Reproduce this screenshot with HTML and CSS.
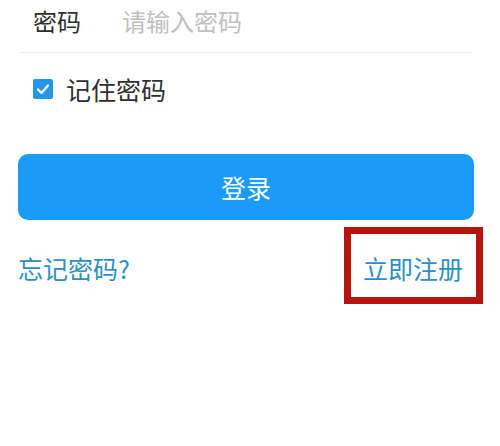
FILE: index.html
```html
<!DOCTYPE html>
<html lang="zh-CN">
<head>
<meta charset="utf-8">
<title>登录</title>
<link rel="stylesheet" href="styles.css">
</head>
<body>
<div class="page">
  <div class="pwd-row">
    <span class="pwd-label">密码</span>
    <span class="pwd-input">请输入密码</span>
  </div>
  <div class="remember">
    <span class="check">
      <svg viewBox="0 0 20 20" width="20" height="20"><path d="M5 10.5 L8.5 14 L15 6.5" fill="none" stroke="#fff" stroke-width="2.2" stroke-linecap="round" stroke-linejoin="round"/></svg>
    </span>
    <span class="remember-text">记住密码</span>
  </div>
  <div class="login-btn">登录</div>
  <div class="links">
    <span class="link">忘记密码?</span>
    <span class="link register">立即注册<span class="mark"></span></span>
  </div>
</div>
</body>
</html>
```
FILE: styles.css
```css
html, body {
  margin: 0;
  padding: 0;
  background: #ffffff;
}
body {
  font-family: "Noto Sans CJK SC", "Noto Sans", sans-serif;
  width: 500px;
  height: 446px;
  overflow: hidden;
}
.pwd-row {
  display: flex;
  align-items: center;
  height: 42px;
  padding: 0 0 10px 13px;
  margin: 0 28px 0 20px;
  border-bottom: 1px solid #ececec;
  font-size: 24px;
  line-height: 30px;
}
.pwd-label {
  color: #2f2f2f;
  width: 89px;
}
.pwd-input {
  color: #c0c0c0;
}
.remember {
  display: flex;
  align-items: center;
  height: 36px;
  margin-top: 18px;
  padding-left: 33px;
  gap: 13px;
  font-size: 25px;
  line-height: 30px;
  color: #2f2f2f;
}
.check {
  display: flex;
  width: 20px;
  height: 20px;
  border-radius: 2px;
  background: #2595ea;
}
.login-btn {
  margin: 47px 26px 0 18px;
  height: 66px;
  border-radius: 10px;
  background: #1a9bf7;
  color: #ffffff;
  font-size: 25px;
  display: flex;
  align-items: center;
  justify-content: center;
}
.links {
  display: flex;
  justify-content: space-between;
  align-items: center;
  height: 36px;
  margin-top: 30px;
  padding: 0 37px 0 18px;
  font-size: 25px;
  line-height: 36px;
  color: #2b8fc5;
}
.register {
  position: relative;
}
.mark {
  position: absolute;
  left: -19px;
  top: -23px;
  width: 139px;
  height: 77px;
  box-sizing: border-box;
  border: 7px solid #b5150f;
}
```
